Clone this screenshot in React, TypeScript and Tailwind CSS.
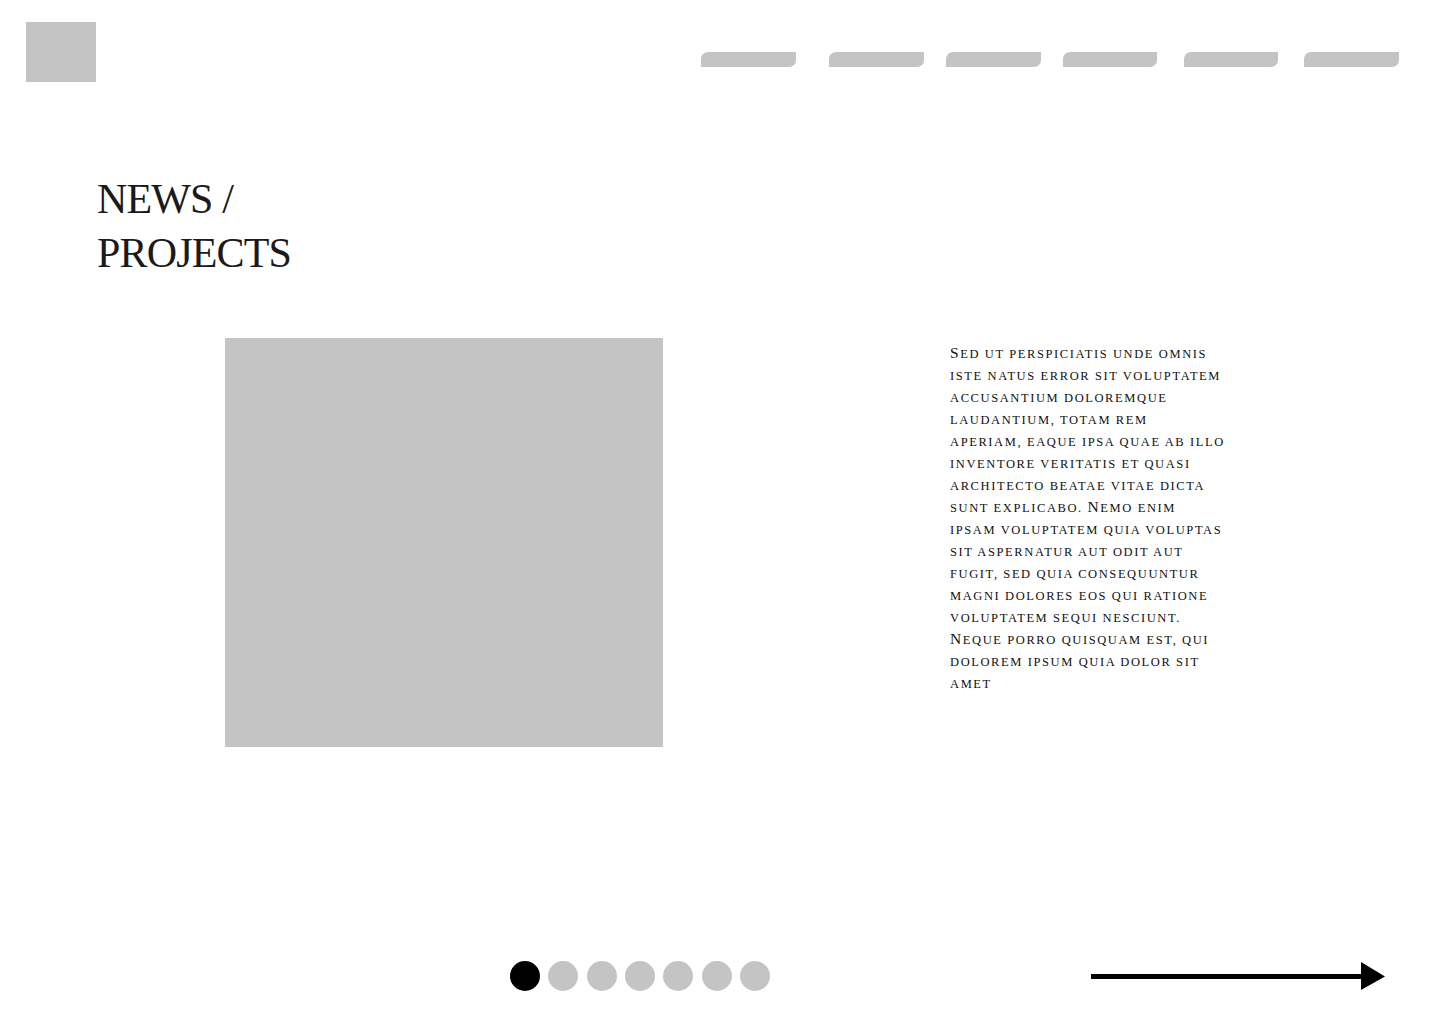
// News / projects slide

const navItems = [
  { id: 1, cls: 'ml-0 w-[95px]' },
  { id: 2, cls: 'ml-[33px] w-[95px]' },
  { id: 3, cls: 'ml-[22px] w-[95px]' },
  { id: 4, cls: 'ml-[22px] w-[94px]' },
  { id: 5, cls: 'ml-[27px] w-[94px]' },
  { id: 6, cls: 'ml-[26px] w-[95px]' },
];

const lines = [
  'Sed ut perspiciatis unde omnis',
  'iste natus error sit voluptatem',
  'accusantium doloremque',
  'laudantium, totam rem',
  'aperiam, eaque ipsa quae ab illo',
  'inventore veritatis et quasi',
  'architecto beatae vitae dicta',
  'sunt explicabo. Nemo enim',
  'ipsam voluptatem quia voluptas',
  'sit aspernatur aut odit aut',
  'fugit, sed quia consequuntur',
  'magni dolores eos qui ratione',
  'voluptatem sequi nesciunt.',
  'Neque porro quisquam est, qui',
  'dolorem ipsum quia dolor sit',
  'amet',
];

// small caps by hand: real capitals a bit bigger than the rest
function SmallCaps({ text }: { text: string }) {
  return (
    <>
      {text.split(/([A-Z])/).map((part, i) =>
        /^[A-Z]$/.test(part) ? (
          <span key={i} className="text-[15.5px] leading-none">
            {part}
          </span>
        ) : (
          <span key={i}>{part}</span>
        )
      )}
    </>
  );
}

export default function App() {
  const activePage = 0;

  return (
    <div className="w-[1440px] h-[1024px] bg-white flex flex-col font-['Liberation_Serif',serif] text-black overflow-hidden">
      {/* Header */}
      <header className="flex justify-between pt-[22px] pl-[26px] pr-[41px]">
        <div className="w-[70px] h-[60px] bg-[#c4c4c4]" />
        <nav className="flex mt-[30px] h-[15px]">
          {navItems.map((item) => (
            <div
              key={item.id}
              className={`${item.cls} h-[15px] bg-[#c4c4c4] rounded-tl-[7px] rounded-br-[7px]`}
            />
          ))}
        </nav>
      </header>

      {/* Title */}
      <h1 className="mt-[90px] pl-[97px] text-[42px] leading-[54px] tracking-[-0.02em] font-normal text-[#1a1a1a]">
        NEWS /
        <br />
        PROJECTS
      </h1>

      {/* Content */}
      <section className="flex mt-[58px] pl-[225px]">
        <div className="w-[438px] h-[409px] bg-[#c4c4c4] shrink-0" />
        <div className="ml-[287px] mt-[5px] text-[12.5px] leading-[22px] tracking-[1.6px] uppercase text-[#111]">
          {lines.map((line, i) => (
            <p key={i} className="h-[22px] whitespace-nowrap">
              <SmallCaps text={line} />
            </p>
          ))}
        </div>
      </section>

      {/* Footer */}
      <footer className="flex items-center mt-[214px] pl-[510px] pr-[55px]">
        <div className="flex gap-[8.33px]">
          {[0, 1, 2, 3, 4, 5, 6].map((i) => (
            <span
              key={i}
              className={`block w-[30px] h-[30px] rounded-full ${
                i === activePage ? 'bg-black' : 'bg-[#c4c4c4]'
              }`}
            />
          ))}
        </div>
        <svg className="ml-auto" width="294" height="30" viewBox="0 0 294 30">
          <line x1="0" y1="15.5" x2="272" y2="15.5" stroke="black" strokeWidth="5" />
          <polygon points="270,1 294,15.5 270,29" fill="black" />
        </svg>
      </footer>
    </div>
  );
}
